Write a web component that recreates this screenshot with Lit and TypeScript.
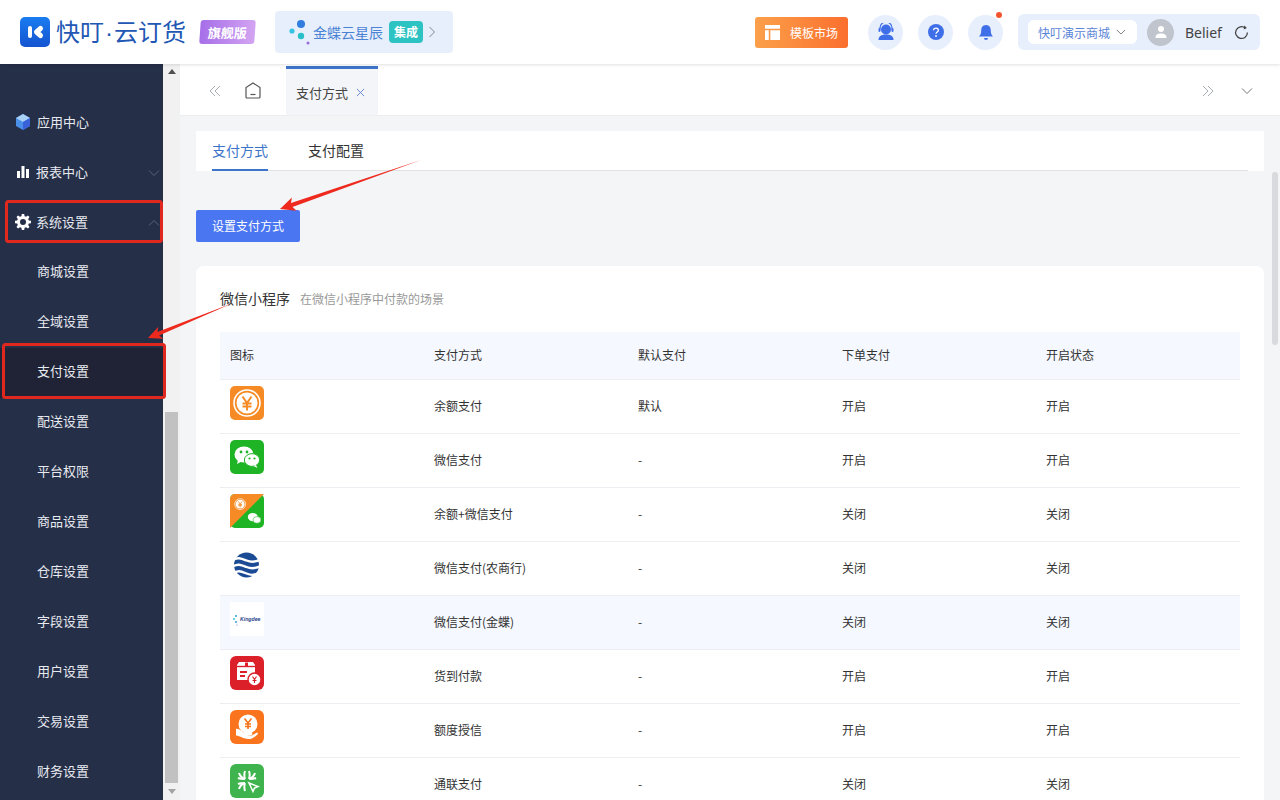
import { LitElement, css, html, svg } from 'lit'
import { customElement } from 'lit/decorators.js'

const wechat = svg`
  <ellipse cx="14" cy="14.5" rx="9.5" ry="8" fill="#fff"/>
  <path d="M8 20l-1 4 4.5-2.5z" fill="#fff"/>
  <circle cx="11" cy="12" r="1.4" fill="#1fb426"/><circle cx="17" cy="12" r="1.4" fill="#1fb426"/>
  <ellipse cx="22" cy="20" rx="7.6" ry="6.4" fill="#fff" stroke="#1fb426" stroke-width="1"/>
  <path d="M26 25l1.5 3-4-2z" fill="#fff"/>
  <circle cx="19.5" cy="18.5" r="1.1" fill="#1fb426"/><circle cx="24.5" cy="18.5" r="1.1" fill="#1fb426"/>`

const yuan = svg`
  <circle cx="17" cy="17" r="13" fill="none" stroke="#fff" stroke-width="1.6"/>
  <circle cx="17" cy="17" r="10.5" fill="#fff"/>
  <path d="M12.5 10.5l4.5 6.5 4.5-6.5M17 17v7.5M12.5 17.5h9M12.5 20.5h9" fill="none" stroke="#f68b25" stroke-width="2"/>`

const icons: Record<string, unknown> = {
  balance: html`<svg viewBox="0 0 34 34" width="34" height="34"><rect width="34" height="34" rx="5" fill="#f68b25"/>${yuan}</svg>`,
  wechat: html`<svg viewBox="0 0 34 34" width="34" height="34"><rect width="34" height="34" rx="5" fill="#1fb426"/>${wechat}</svg>`,
  mixed: html`<svg viewBox="0 0 34 34" width="34" height="34">
    <rect width="34" height="34" rx="5" fill="#1fb426"/>
    <path d="M5 0h29L0 34V5a5 5 0 0 1 5-5z" fill="#f68b25"/>
    <g transform="translate(3 3) scale(.42)">${yuan}</g>
    <g transform="translate(15.5 15.5) scale(.52)"><ellipse cx="14" cy="14.5" rx="9.5" ry="8" fill="#fff"/><ellipse cx="22" cy="20" rx="7.6" ry="6.4" fill="#fff" stroke="#1fb426"/></g>
  </svg>`,
  bank: html`<svg viewBox="0 0 34 34" width="34" height="34">
    <circle cx="16.500" cy="17" r="12.500" fill="#1b4b94"/>
    <path d="M2 12.500c5-4 9.500-2 14.500 0s9 2 15-1.500M2 19c5-4 9.500-2 14.500 0s9 2 15-1.500M3 25.500c5-4 8.500-2 13.500 0s8 2 14-1.500" fill="none" stroke="#fff" stroke-width="2.400"/>
  </svg>`,
  kingdee: html`<svg viewBox="0 0 34 34" width="34" height="34">
    <rect width="34" height="34" fill="#fff"/>
    <circle cx="6" cy="14" r="1" fill="#2a9fd8"/><circle cx="4" cy="17" r="1" fill="#35c3d8"/><circle cx="6" cy="20" r="1" fill="#2a9fd8"/><circle cx="7" cy="23" r=".6" fill="#8d6bd8"/>
    <text x="10" y="19" font-size="5.200" font-weight="700" font-style="italic" font-family="Liberation Sans, sans-serif" fill="#27408b">Kingdee</text>
  </svg>`,
  cod: html`<svg viewBox="0 0 34 34" width="34" height="34">
    <rect width="34" height="34" rx="6" fill="#db2029"/>
    <path d="M7 9l2-3h14l2 3v15H7z" fill="#fff"/>
    <path d="M7 10.5h18" stroke="#db2029" stroke-width="1.4"/><path d="M15 6.5h3v4h-3z" fill="#db2029"/>
    <path d="M10 16h7M10 20h5" stroke="#db2029" stroke-width="2"/>
    <circle cx="24.5" cy="23.5" r="6.5" fill="#fff" stroke="#db2029" stroke-width="1.4"/>
    <path d="M22.5 20.5l2 3 2-3M24.5 23.5v3.5M22.5 24.5h4" fill="none" stroke="#db2029" stroke-width="1.1"/>
  </svg>`,
  credit: html`<svg viewBox="0 0 34 34" width="34" height="34">
    <rect width="34" height="34" rx="6" fill="#f9741d"/>
    <circle cx="18" cy="14" r="9.5" fill="#fff"/>
    <path d="M14.5 8.5l3.5 4.5 3.5-4.5M18 13v6M15 14h6M15 16.5h6" fill="none" stroke="#f9741d" stroke-width="1.6"/>
    <path d="M6 19c3-1 6 3 9 4h6c2 0 2 2 0 2h-4l5 .5 5-3c1 0 1 1 .5 2-3 3-6 4.500-9 4.500-5 0-8-3-12.500-3.500z" fill="#fff"/>
  </svg>`,
  allinpay: html`<svg viewBox="0 0 34 34" width="34" height="34">
    <rect width="34" height="34" rx="6" fill="#3fb44e"/>
    <path d="M15 15c-3-1-5-3-6-6M15 15c-1-3-1-5 0-8M15 15c-3 0-5 0-7-1M19 15c3-1 5-3 6-6M19 15c1-3 1-5 0-8M19 15c3 0 5 0 7-1M15 19c-3 1-5 3-6 6M15 19c-1 3-1 5 0 8M15 19c-3 0-5 0-7 1" fill="none" stroke="#fff" stroke-width="2"/>
    <path d="M19 19l9 3.500-3.500 1.500-1.500 3.500z" fill="#3fb44e" stroke="#fff" stroke-width="1.500"/>
  </svg>`,
}

const chevron = (up = false) => html`<svg class="chev" viewBox="0 0 12 12" width="12" height="12"><path d=${up ? 'M1 8.500l5-5 5 5' : 'M1 3.500l5 5 5-5'} fill="none" stroke="currentColor" stroke-width="1"/></svg>`
const doubleChev = (left: boolean) => html`<svg viewBox="0 0 12 12" width="12" height="12" style=${left ? '' : 'transform: scaleX(-1)'}><path d="M6 1L1 6l5 5M11 1L6 6l5 5" fill="none" stroke="#a9adb5" stroke-width="1"/></svg>`

const rows = [
  ['balance', '余额支付', '默认', '开启', '开启'],
  ['wechat', '微信支付', '-', '开启', '开启'],
  ['mixed', '余额+微信支付', '-', '关闭', '关闭'],
  ['bank', '微信支付(农商行)', '-', '关闭', '关闭'],
  ['kingdee', '微信支付(金蝶)', '-', '关闭', '关闭'],
  ['cod', '货到付款', '-', '开启', '开启'],
  ['credit', '额度授信', '-', '开启', '开启'],
  ['allinpay', '通联支付', '-', '关闭', '关闭'],
]

const subMenu = ['商城设置', '全域设置', '支付设置', '配送设置', '平台权限', '商品设置', '仓库设置', '字段设置', '用户设置', '交易设置', '财务设置']

@customElement('app-root')
export class AppRoot extends LitElement {
  static styles = css`
    :host {
      display: block;
      width: 1280px;
      height: 800px;
      overflow: hidden;
      position: relative;
      font-family: "Noto Sans CJK SC", "Noto Sans", sans-serif;
      font-size: 12px;
      color: #333;
      background: #f4f5f7;
    }
    svg { display: block; flex: none; }
    .top {
      height: 64px;
      background: #fff;
      display: flex;
      align-items: center;
      padding: 0 20px;
      box-shadow: 0 1px 3px rgba(0, 0, 0, .12);
      position: relative;
      z-index: 2;
    }
    .logo-text { font-size: 24px; color: #2257b4; margin-left: 6px; line-height: 30px; white-space: nowrap; width: 130px; }
    .logo-text i { font-style: normal; font-family: "Liberation Sans", sans-serif; margin: 0 1px; }
    .tag {
      margin-left: 14px;
      width: 55px;
      height: 24px;
      border-radius: 3px;
      background: linear-gradient(90deg, #a66ee8, #d3a4f2);
      color: #fff;
      font-size: 13px;
      font-weight: 700;
      display: flex;
      align-items: center;
      justify-content: center;
      transform: skewX(-4deg);
    }
    .kingdee {
      margin-left: 20px;
      width: 178px;
      height: 42px;
      box-sizing: border-box;
      padding-left: 14px;
      background: #e8effc;
      border-radius: 4px;
      display: flex;
      align-items: center;
      color: #4a83d4;
      font-size: 14px;
    }
    .kingdee b {
      margin-left: 6px;
      width: 34px;
      height: 22px;
      line-height: 22px;
      text-align: center;
      border-radius: 4px;
      background: #2ec3c3;
      color: #fff;
      font-size: 12px;
    }
    .kingdee svg:last-child { margin-left: 3px; color: #7d8796; }
    .spacer { flex: 1; }
    .market {
      width: 93px;
      height: 31px;
      border-radius: 3px;
      background: linear-gradient(90deg, #fba04a, #fb6f2e);
      color: #fff;
      display: flex;
      align-items: center;
      gap: 10px;
      padding-left: 10px;
      box-sizing: border-box;
      font-size: 12px;
    }
    .round {
      width: 35px;
      height: 35px;
      border-radius: 50%;
      background: #e8effc;
      margin-left: 15px;
      display: flex;
      align-items: center;
      justify-content: center;
      position: relative;
    }
    .market + .round { margin-left: 20px; }
    .dot { position: absolute; right: 1px; top: -3px; width: 6px; height: 6px; border-radius: 50%; background: #f4552f; }
    .user {
      margin-left: 15px;
      width: 242px;
      height: 36px;
      box-sizing: border-box;
      padding: 0 10px;
      background: #e8effc;
      border-radius: 6px;
      display: flex;
      align-items: center;
    }
    .shop {
      width: 109px;
      height: 24px;
      border-radius: 6px;
      background: #fff;
      color: #5b85d6;
      display: flex;
      align-items: center;
      gap: 6px;
      padding-left: 10px;
      box-sizing: border-box;
    }
    .shop .chev { color: #666; width: 10px; height: 10px; }
    .avatar {
      width: 27px;
      height: 27px;
      margin-left: 10px;
      border-radius: 50%;
      background: #c0c4cc;
      display: flex;
      align-items: center;
      justify-content: center;
    }
    .name { margin-left: 11px; font-size: 14px; color: #444; width: 49px; font-family: "Noto Sans", sans-serif; }
    .body { display: flex; height: 736px; }
    .side { width: 163px; background: #252f48; padding-top: 34px; box-sizing: border-box; overflow: hidden; flex: none; }
    .item {
      height: 50px;
      box-sizing: border-box;
      padding-bottom: 5px;
      display: flex;
      align-items: center;
      color: #e8eaf0;
      font-size: 13px;
      padding-left: 37px;
      position: relative;
    }
    .item.group { padding-left: 15px; padding-bottom: 3px; gap: 5px; }
    .item.app { gap: 6px; }
    .item.active { background: #1f2335; }
    .item .chev { position: absolute; right: 3px; top: 19px; color: #59627a; }
    .rail { width: 17px; flex: none; background: #f1f1f1; display: flex; flex-direction: column; align-items: center; justify-content: space-between; }
    .rail-top { height: 348px; padding-top: 5px; box-sizing: border-box; }
    .thumb { width: 13px; height: 371px; background: #c1c1c1; }
    .rail-bottom { height: 17px; display: flex; align-items: center; }
    .tri-up { width: 0; height: 0; border: 4px solid transparent; border-top: 0; border-bottom: 5px solid #505050; }
    .tri-down { width: 0; height: 0; border: 4px solid transparent; border-bottom: 0; border-top: 5px solid #a3a3a3; }
    .main { flex: 1; min-width: 0; position: relative; }
    .tabs {
      height: 52px;
      box-sizing: border-box;
      background: #fff;
      border-bottom: 1px solid #eceef1;
      display: flex;
      align-items: flex-end;
      padding-left: 29px;
    }
    .tabs > .btn { height: 49px; display: flex; align-items: center; }
    .home { margin-left: 24px; margin-right: 25px; }
    .tab {
      width: 92px;
      height: 49px;
      box-sizing: border-box;
      border-top: 3px solid #3d74c9;
      background: #f3f5f8;
      display: flex;
      align-items: center;
      padding-left: 10px;
      gap: 8px;
      color: #444;
      font-size: 13px;
    }
    .tabs .grow { flex: 1; }
    .tabs .r1 { margin-right: 27px; }
    .tabs .r2 { margin-right: 27px; color: #777; }
    .content { padding: 15px 16px 16px; }
    .sub { height: 40px; background: #fff; padding: 0 16px; box-sizing: border-box; }
    .sub-in { height: 40px; box-sizing: border-box; border-bottom: 1px solid #e0e2e6; display: flex; gap: 40px; }
    .sub a { font-size: 14px; line-height: 38px; height: 40px; box-sizing: border-box; color: #333; }
    .sub a.on { color: #3d74c9; border-bottom: 2px solid #3d74c9; }
    .primary {
      margin-top: 39px;
      width: 104px;
      height: 32px;
      box-sizing: border-box;
      padding-bottom: 2px;
      border-radius: 2px;
      background: #4a76f2;
      color: #fff;
      display: flex;
      align-items: center;
      justify-content: center;
    }
    .card { margin-top: 24px; background: #fff; border-radius: 8px; padding: 22px 24px 0; }
    .card-title { display: flex; align-items: center; gap: 10px; height: 22px; box-sizing: border-box; padding-bottom: 2px; font-size: 14px; color: #333; }
    .card-title small { font-size: 12px; color: #999; }
    table { margin-top: 22px; width: 1020px; border-collapse: collapse; table-layout: fixed; }
    th { height: 47px; padding: 0 10px 2px; background: #f5f8fe; font-weight: 400; text-align: left; border-bottom: 1px solid #eceef1; box-sizing: border-box; }
    td { height: 54px; padding: 0 10px 2px; border-bottom: 1px solid #eceef1; box-sizing: border-box; }
    td.ic { vertical-align: top; padding-top: 6px; }
    tr.hl td { background: #f5f8fe; }
    .vbar { position: absolute; right: 2px; top: 108px; width: 6px; height: 173px; border-radius: 3px; background: #d9dadd; }
    .marks { position: absolute; inset: 0; pointer-events: none; z-index: 3; }
  `

  render() {
    return html`
      <div class="top">
        <svg viewBox="0 0 30 30" width="30" height="30">
          <defs><linearGradient id="lg" x1="0" y1="0" x2="0" y2="1"><stop offset="0" stop-color="#1a7cf0"/><stop offset="1" stop-color="#1554d0"/></linearGradient></defs>
          <rect width="30" height="30" rx="5" fill="url(#lg)"/>
          <path d="M10 11v8" stroke="#fff" stroke-width="4" stroke-linecap="round"/>
          <path d="M20.500 11.500L16.500 15l4 3.500" fill="none" stroke="#fff" stroke-width="5" stroke-linecap="round" stroke-linejoin="round"/>
        </svg>
        <div class="logo-text">快叮<i>·</i>云订货</div>
        <div class="tag">旗舰版</div>
        <div class="kingdee">
          <svg viewBox="0 0 24 26" width="24" height="26">
            <circle cx="12" cy="5" r="4" fill="#2f7ee0"/><circle cx="3" cy="12" r="2.600" fill="#37c3e4"/><circle cx="12" cy="17" r="3.200" fill="#27c0c8"/><circle cx="19" cy="24" r="1.500" fill="#9a6bd8"/>
          </svg>
          <span>金蝶云星辰</span>
          <b>集成</b>
          <svg viewBox="0 0 12 12" width="12" height="12"><path d="M3.500 1l5 5-5 5" fill="none" stroke="currentColor" stroke-width="1"/></svg>
        </div>
        <div class="spacer"></div>
        <div class="market">
          <svg viewBox="0 0 14 14" width="15" height="15"><path d="M0 0h14v3.500H0zM0 5h3.500v9H0zM5 5h9v9H5z" fill="#fff"/></svg>
          模板市场
        </div>
        <div class="round">
          <svg viewBox="0 0 18 18" width="18" height="18"><circle cx="9" cy="6.500" r="5" fill="#3f6fe8"/><path d="M3 6.500V5a6 6 0 0 1 12 0v1.500" fill="none" stroke="#3f6fe8" stroke-width="1.200"/><rect x="1.500" y="5" width="2" height="4" rx="1" fill="#3f6fe8"/><rect x="14.500" y="5" width="2" height="4" rx="1" fill="#3f6fe8"/><path d="M1.500 17c0-4 3-5.500 7.500-5.500s7.500 1.500 7.500 5.500z" fill="#3f6fe8"/></svg>
        </div>
        <div class="round">
          <svg viewBox="0 0 16 16" width="16" height="16"><circle cx="8" cy="8" r="8" fill="#3f6fe8"/><path d="M5.600 6.200C5.600 3.400 10.400 3.400 10.400 6.200c0 1.800-2.400 1.800-2.400 3.600" fill="none" stroke="#fff" stroke-width="1.300"/><circle cx="8" cy="12" r=".9" fill="#fff"/></svg>
        </div>
        <div class="round">
          <svg viewBox="0 0 14 17" width="14" height="17"><path d="M7 1c3.500 0 4.800 2.800 4.800 5.500 0 3 .7 4.500 2.200 6H0c1.500-1.500 2.200-3 2.200-6C2.200 3.800 3.500 1 7 1z" fill="#3f6fe8"/><path d="M5 14h4a2 2 0 0 1-4 0z" fill="#3f6fe8"/></svg>
          <i class="dot"></i>
        </div>
        <div class="user">
          <div class="shop">快叮演示商城 ${chevron()}</div>
          <div class="avatar">
            <svg viewBox="0 0 14 14" width="14" height="14"><circle cx="7" cy="4" r="3" fill="#fff"/><path d="M1.500 13c0-3.500 2-4.500 5.500-4.500s5.500 1 5.500 4.500z" fill="#fff"/></svg>
          </div>
          <div class="name">Belief</div>
          <svg viewBox="0 0 14 14" width="15" height="15"><path d="M12.500 7A5.500 5.500 0 1 1 10.500 2.800" fill="none" stroke="#444" stroke-width="1.200"/><path d="M9.500 .5l2.600 2.300-3 1.300z" fill="#444"/></svg>
        </div>
      </div>
      <div class="body">
        <nav class="side">
          <div class="item group app">
            <svg viewBox="0 0 16 16" width="16" height="16"><path d="M8 0l7 4v8l-7 4-7-4V4z" fill="#4a8fe8"/><path d="M8 8l7-4-7-4-7 4z" fill="#a9d0f5"/><path d="M8 8v8l7-4V4z" fill="#3a62d8"/></svg>
            应用中心
          </div>
          <div class="item group">
            <svg viewBox="0 0 14 14" width="16" height="14"><path d="M1 6h3v7H1zM5.500 1h3v12h-3zM10 4h3v9h-3z" fill="#fff"/></svg>
            报表中心 ${chevron()}
          </div>
          <div class="item group">
            <svg viewBox="0 0 16 16" width="16" height="16"><path d="M6.800 0h2.400l.4 2.200 1.500.6L12.900 1.500l1.600 1.600-1.300 1.800.6 1.500 2.200.4v2.400l-2.200.4-.6 1.500 1.300 1.800-1.600 1.600-1.800-1.300-1.500.6-.4 2.200H6.800l-.4-2.200-1.500-.6-1.800 1.300-1.600-1.600 1.300-1.800-.6-1.500L0 9.200V6.800l2.200-.4.6-1.500-1.300-1.800 1.600-1.600 1.800 1.300 1.500-.6z" fill="#fff"/><circle cx="8" cy="8" r="3" fill="#252f48"/></svg>
            系统设置 ${chevron(true)}
          </div>
          ${subMenu.map(s => html`<div class="item ${s === '支付设置' ? 'active' : ''}">${s}</div>`)}
        </nav>
        <div class="rail">
          <div class="rail-top"><div class="tri-up"></div></div>
          <div class="thumb"></div>
          <div class="rail-bottom"><div class="tri-down"></div></div>
        </div>
        <div class="main">
          <div class="tabs">
            <div class="btn">${doubleChev(true)}</div>
            <div class="btn home">
              <svg viewBox="0 0 16 17" width="16" height="17"><path d="M8 1l7 4.500V15a1 1 0 0 1-1 1H2a1 1 0 0 1-1-1V5.500z" fill="none" stroke="#555" stroke-width="1.200"/><path d="M5.500 12.500h5" stroke="#555" stroke-width="1.200"/></svg>
            </div>
            <div class="tab">
              支付方式
              <svg viewBox="0 0 10 10" width="9" height="9"><path d="M1 1l8 8M9 1l-8 8" stroke="#5c7fd0" stroke-width="1"/></svg>
            </div>
            <div class="grow"></div>
            <div class="btn r1">${doubleChev(false)}</div>
            <div class="btn r2">${chevron()}</div>
          </div>
          <div class="content">
            <div class="sub"><div class="sub-in"><a class="on">支付方式</a><a>支付配置</a></div></div>
            <div class="primary">设置支付方式</div>
            <div class="card">
              <div class="card-title">微信小程序 <small>在微信小程序中付款的场景</small></div>
              <table>
                <thead><tr><th>图标</th><th>支付方式</th><th>默认支付</th><th>下单支付</th><th>开启状态</th></tr></thead>
                <tbody>
                  ${rows.map(r => html`
                    <tr class=${r[0] === 'kingdee' ? 'hl' : ''}>
                      <td class="ic">${icons[r[0]]}</td>
                      <td>${r[1]}</td><td>${r[2]}</td><td>${r[3]}</td><td>${r[4]}</td>
                    </tr>`)}
                </tbody>
              </table>
            </div>
          </div>
          <div class="vbar"></div>
        </div>
      </div>
      <!-- annotations drawn over the screenshot -->
      <svg class="marks" viewBox="0 0 1280 800" width="1280" height="800">
        <rect x="6.500" y="201.500" width="155" height="40" rx="2" fill="none" stroke="#e0281e" stroke-width="3"/>
        <rect x="3.500" y="344.500" width="161" height="53" rx="2" fill="none" stroke="#e0281e" stroke-width="3"/>
        <path d="M421 160L292.500 207l4 3.700L280 209l11.900-11.500L291 203z" fill="#ee2a1e"/>
        <path d="M233 303L159 335.600l4.400 3.100L148 338l10.400-11.300L157.400 332z" fill="#ee2a1e"/>
      </svg>
    `
  }
}
